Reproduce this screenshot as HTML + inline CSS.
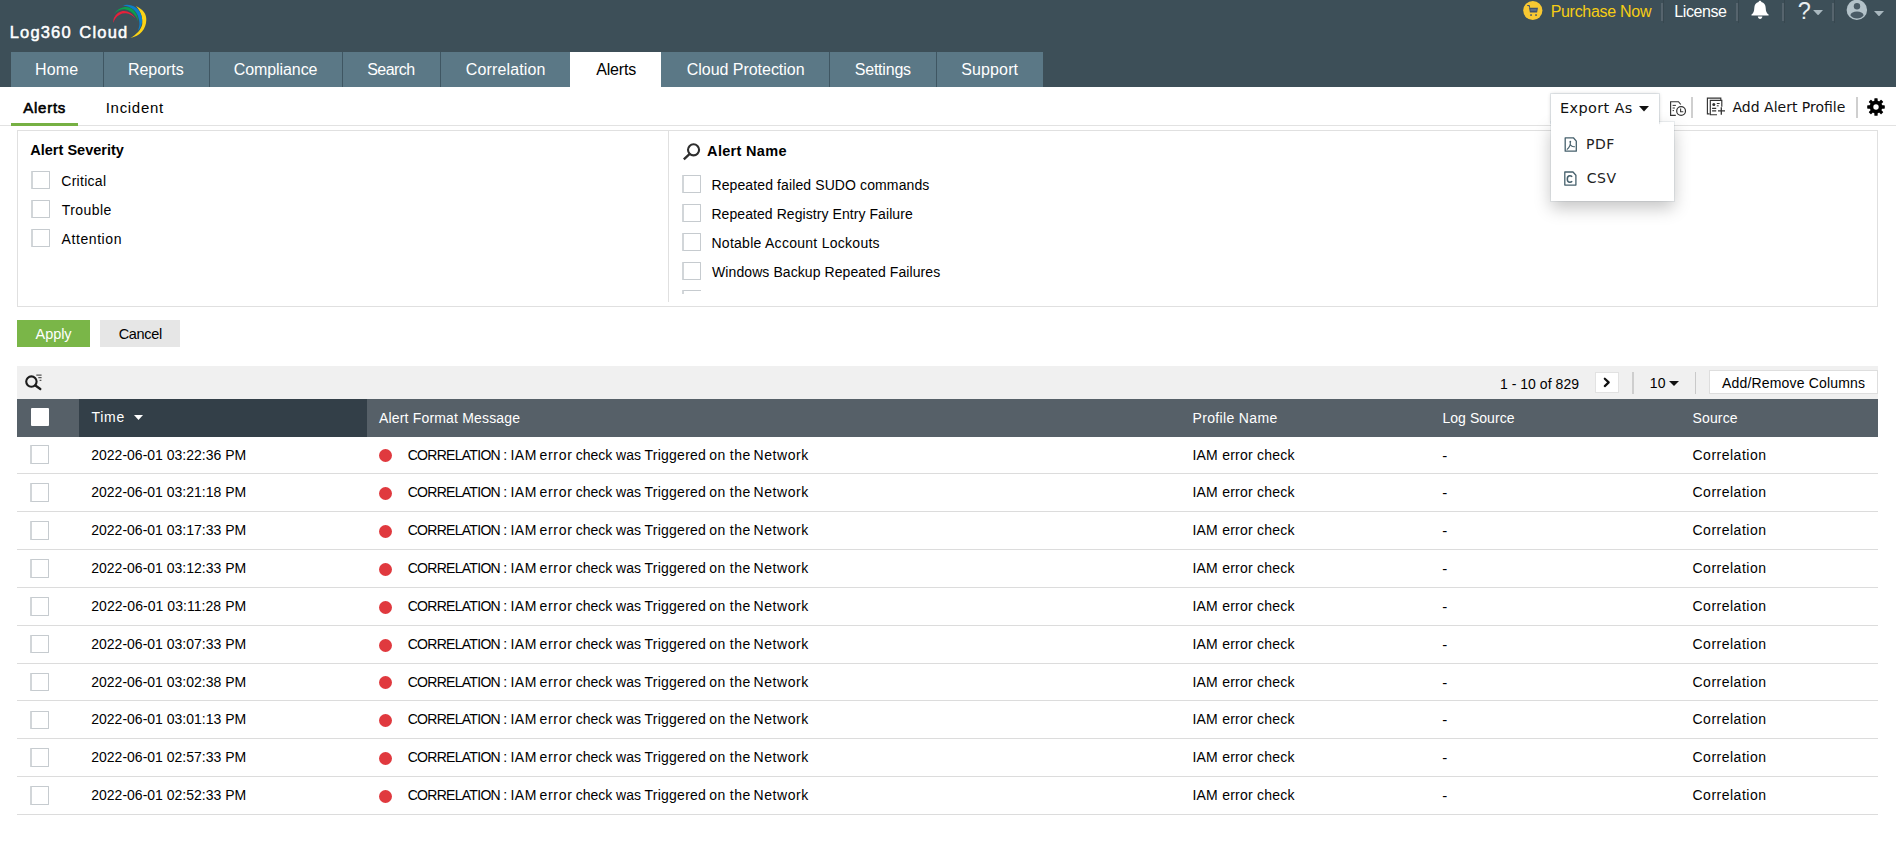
<!DOCTYPE html>
<html lang="en"><head><meta charset="utf-8"><title>Log360 Cloud - Alerts</title>
<style>
html,body{margin:0;padding:0;}
body{width:1896px;height:846px;overflow:hidden;background:#fff;position:relative;font-family:"Liberation Sans",sans-serif;font-size:14px;color:#000;}
.a{position:absolute;box-sizing:border-box;}
.t{position:absolute;white-space:nowrap;line-height:1;}
#hdr{left:0;top:0;width:1896px;height:87px;background:#3d4f58;}
.nav{top:52px;height:35px;background:#5b7886;border-right:1px solid #3f5662;}
.nav.sel{background:#fff;border:none;}
.hsep{top:3px;width:2px;height:18px;background:#56646d;}
.hsep2{top:0;width:1px;height:23px;background:#37474f;}
.cb{width:19px;height:18px;border:1px solid #c6cbcf;border-left:2px solid #d2d6d9;background:#fff;border-radius:1px;}
.row{left:17px;width:1861px;height:1px;background:#dcdcdc;}
.dot{left:379px;width:13px;height:13px;border-radius:50%;background:#e0393e;}
.vsep{width:1px;background:#c9c9c9;}
.rc{height:18.700px;margin-top:-.2px;}

</style></head>
<body>
<div class="a" id="hdr"></div>
<!-- logo arcs -->
<svg class="a" style="left:108px;top:0;width:44px;height:46px" viewBox="108 0 44 46">
  <path d="M136 6 C143.500 9.500 146.600 14.500 146.300 20 C146.200 29 140 36.300 130.300 38 C136.500 34.500 141 30 142.300 24 C142.800 17 140.500 11 136 6Z" fill="#fbd316"/>
  <path d="M123 5.400 C127 4.200 132 5 135.700 7.400 C139.500 10 142 14.500 142.200 19.900 C142.300 24 140.500 28 137.700 30.900 C139.200 27.500 139.600 25 139.400 22.700 C139 17 136.500 12 133.400 9.600 C130.500 7.200 127 5.800 123 5.400Z" fill="#0d7fc9"/>
  <path d="M113.900 14.500 C116 10.500 120 7.800 124.400 7.100 C128.500 6.600 132.500 8.500 135.100 11.900 C137.400 15 138.300 18.500 138 21.800 C137.500 19 136.800 17.800 135.700 16.500 C133 12.500 129.500 9.900 125.500 9.400 C121 9 116.800 11 113.900 14.500Z" fill="#0aa14f"/>
  <path d="M113.300 23 C113.200 20.500 113.500 19 114.200 17.600 C116 13.800 119.500 11.500 122.700 11.100 C127.500 10.500 132.500 13.500 135.400 18.400 C132.300 15.200 129.500 13.700 126 13.300 C121.500 13 117.800 15.200 115.600 18.200 C114.500 19.800 113.800 21.200 113.300 23Z" fill="#e8203a"/>
</svg>
<!-- nav tabs -->
<div class="a nav" style="left:11px;width:93px"></div>
<div class="a nav" style="left:104px;width:106px"></div>
<div class="a nav" style="left:210px;width:133px"></div>
<div class="a nav" style="left:343px;width:98px"></div>
<div class="a nav" style="left:441px;width:129px;border-right:none"></div>
<div class="a nav sel" style="left:570px;width:91px"></div>
<div class="a nav" style="left:661px;width:169px"></div>
<div class="a nav" style="left:830px;width:107px"></div>
<div class="a nav" style="left:937px;width:106px;border-right:none"></div>
<!-- top right -->
<svg class="a" style="left:1522px;top:0;width:22px;height:22px" viewBox="1522 0 22 22">
  <circle cx="1532.8" cy="10.5" r="9.6" fill="#f8c832"/>
  <path d="M1527.200 5.500h1.900l.6 2.100" fill="none" stroke="#3f516c" stroke-width="1.100"/>
  <path d="M1529 7.800h9l-.9 4.600h-7.200z" fill="#3f516c"/>
  <rect x="1530.500" y="9.200" width="6" height="1.500" fill="#66768a"/>
  <rect x="1530.200" y="14.300" width="1.700" height="1.500" fill="#3f516c"/><rect x="1535.200" y="14.300" width="1.700" height="1.500" fill="#3f516c"/>
</svg>
<div class="a hsep" style="left:1661px"></div><div class="a hsep2" style="left:1663px"></div>
<div class="a hsep" style="left:1736px"></div><div class="a hsep2" style="left:1738px"></div>
<div class="a hsep" style="left:1782px"></div><div class="a hsep2" style="left:1784px"></div>
<div class="a hsep" style="left:1832px"></div><div class="a hsep2" style="left:1834px"></div>
<svg class="a" style="left:1751px;top:0;width:19px;height:20px" viewBox="0 0 19 20">
  <path d="M9 .8C9.900 .8 10.300 1.400 10.400 2.100C13 2.800 14.600 5 14.700 8C14.800 11.500 15.600 13 17.600 14.600V15.600H.5V14.600C2.400 13 3.200 11.500 3.300 8C3.400 5 5 2.800 7.600 2.100C7.700 1.400 8.100 .8 9 .8Z" fill="#fff"/>
  <path d="M6.800 16.500H11.400C11.200 18 10.300 18.900 9.100 18.900C7.900 18.900 7 18 6.800 16.500Z" fill="#fff"/>
</svg>
<svg class="a" style="left:1813px;top:9.800px;width:10.200px;height:5.400px" viewBox="0 0 10 5.400"><path d="M0 0h10l-5 5.400z" fill="#a9b8bf"/></svg>
<svg class="a" style="left:1846px;top:0;width:22px;height:21px" viewBox="1846 0 22 21">
  <circle cx="1856.850" cy="9.900" r="10.200" fill="#b3c2c9"/>
  <circle cx="1857" cy="6.300" r="3.200" fill="#4a5b66"/>
  <path d="M1850.300 15.200C1851 12.600 1853.500 11.400 1857 11.400C1860.500 11.400 1863 12.600 1863.700 15.200C1862 17.300 1859.700 18.400 1857 18.400C1854.300 18.400 1852 17.300 1850.300 15.200Z" fill="#4a5b66"/>
</svg>
<svg class="a" style="left:1874px;top:10.800px;width:10px;height:5.400px" viewBox="0 0 10 5.400"><path d="M0 0h10l-5 5.400z" fill="#a9b8bf"/></svg>

<!-- sub tab -->
<div class="a" style="left:0;top:125px;width:1896px;height:1px;background:#e2e2e2"></div>
<div class="a" style="left:11px;top:123px;width:67px;height:3px;background:#76b043"></div>

<!-- filter panel -->
<div class="a" style="left:17px;top:130px;width:1861px;height:177px;border:1px solid #e0e0e0;background:#fff"></div>
<div class="a" style="left:668px;top:131px;width:1px;height:171px;background:#e0e0e0"></div>
<div class="a cb" style="left:31px;top:171px"></div>
<div class="a cb" style="left:31px;top:200px"></div>
<div class="a cb" style="left:31px;top:228.700px"></div>
<svg class="a" style="left:681px;top:141px;width:22px;height:21px" viewBox="681 141 22 21">
  <circle cx="693.550" cy="149.850" r="5.550" fill="none" stroke="#2e2e2e" stroke-width="2.100"/>
  <path d="M689.400 154.100L684.700 158.500" stroke="#2e2e2e" stroke-width="2.400" stroke-linecap="square"/>
</svg>
<div class="a cb" style="left:682px;top:175.400px"></div>
<div class="a cb" style="left:682px;top:204.200px"></div>
<div class="a cb" style="left:682px;top:233px"></div>
<div class="a cb" style="left:682px;top:261.700px"></div>
<div class="a" style="left:682px;top:290px;width:19px;height:4px;overflow:hidden"><div class="cb"></div></div>
<div class="a" style="left:17px;top:320px;width:73px;height:27px;background:#7ab648"></div>
<div class="a" style="left:100px;top:320px;width:80px;height:27px;background:#e6e6e6"></div>

<!-- export dropdown -->
<div class="a" style="left:1551px;top:122px;width:123px;height:79px;background:#fff;box-shadow:0 7px 16px rgba(0,0,0,.23),0 0 0 1px rgba(120,145,160,.13)"></div>
<div class="a" style="left:1551px;top:94px;width:108px;height:29px;background:#fff;box-shadow:0 0 4px rgba(0,0,0,.18),0 0 0 1px rgba(120,145,160,.16)"></div>
<div class="a" style="left:1551px;top:121px;width:108px;height:8px;background:#fff"></div>
<svg class="a" style="left:1639px;top:106px;width:10px;height:6px" viewBox="0 0 10 6"><path d="M0 0h10l-5 5.6z" fill="#111"/></svg>
<!-- schedule icon -->
<svg class="a" style="left:1668px;top:98px;width:22px;height:20px" viewBox="1668 98 22 20">
  <path d="M1675.800 115.300H1670.600V101.700H1678.500L1680.800 104.500" fill="none" stroke="#333" stroke-width="1.150"/>
  <path d="M1672.600 105.400h3.300M1672.600 108h2.300M1672.600 110.600h1.400" stroke="#333" stroke-width="1"/>
  <circle cx="1681.100" cy="111" r="4.400" fill="#fff" stroke="#333" stroke-width="1.200"/>
  <path d="M1680.600 108.400v3.300h2.700" fill="none" stroke="#333" stroke-width="1.100"/>
</svg>
<div class="a" style="left:1691px;top:97px;width:2px;height:21px;background:#cfcfcf"></div>
<!-- add profile icon -->
<svg class="a" style="left:1705px;top:96px;width:22px;height:21px" viewBox="1705 96 22 21">
  <path d="M1709.600 113.800H1707.400V98.100H1720.800V100" fill="none" stroke="#333" stroke-width="1.150"/>
  <path d="M1717 114.700H1710.300V100.400H1721.800V106.700" fill="none" stroke="#333" stroke-width="1.150"/>
  <circle cx="1713.800" cy="104.600" r="1.500" fill="#333"/>
  <path d="M1716.800 103.500h2.800M1716.800 105.800h1.900" stroke="#333" stroke-width="1"/>
  <path d="M1712.100 108.400h4.100M1712.100 110.800h4.100" stroke="#333" stroke-width="1.200"/>
  <path d="M1721.300 107.300v7.500M1718 110.900h7" stroke="#333" stroke-width="1.300"/>
</svg>
<div class="a" style="left:1856px;top:97px;width:2px;height:21px;background:#cfcfcf"></div>
<!-- gear -->
<svg class="a" style="left:1865.600px;top:97.400px;width:20px;height:20px" viewBox="-10 -10 20 20">
  <g fill="#000">
    <circle r="6.400"/>
    <rect id="gt" x="-1.650" y="-8.800" width="3.300" height="17.600" rx=".6"/>
    <use href="#gt" transform="rotate(45)"/><use href="#gt" transform="rotate(90)"/><use href="#gt" transform="rotate(135)"/>
  </g>
  <circle r="2.700" fill="#fff"/>
</svg>
<!-- pdf / csv icons -->
<svg class="a" style="left:1562px;top:135px;width:18px;height:19px" viewBox="1562 135 18 19">
  <path d="M1565.200 137.800H1573.400L1576.300 141.100V151.200H1565.200Z" fill="none" stroke="#46606c" stroke-width="1.300" stroke-linejoin="round"/>
  <circle cx="1570.300" cy="141.700" r=".9" fill="#46606c"/>
  <path d="M1570.300 142C1570.600 144 1569.500 147.300 1566.800 149.600M1570.300 144.800C1571.500 146.300 1573 147 1574.800 146.600" fill="none" stroke="#46606c" stroke-width="1.100"/>
</svg>
<svg class="a" style="left:1562px;top:169px;width:18px;height:19px" viewBox="1562 169 18 19">
  <path d="M1564.800 172H1573L1575.900 175.200V185.100H1564.800Z" fill="none" stroke="#46606c" stroke-width="1.300" stroke-linejoin="round"/>
  <path d="M1572.200 176.700C1571.500 176 1570.700 175.700 1569.800 175.700C1568.200 175.700 1567.300 177.100 1567.300 179C1567.300 180.900 1568.200 182.300 1569.800 182.300C1570.700 182.300 1571.500 182 1572.200 181.300" fill="none" stroke="#46606c" stroke-width="1.500"/>
</svg>

<!-- table toolbar -->
<div class="a" style="left:17px;top:366px;width:1861px;height:33px;background:#f0f0f0"></div>
<svg class="a" style="left:23px;top:372px;width:21px;height:20px" viewBox="23 372 21 20">
  <circle cx="31.400" cy="381.600" r="5.200" fill="none" stroke="#1c1c1c" stroke-width="2.100"/>
  <path d="M35.400 385.500L40.300 389" stroke="#1c1c1c" stroke-width="2.300" stroke-linecap="round"/>
  <path d="M36.300 375.100h5.300M38.300 377.700h3.300M39.600 380.300h1.800" stroke="#1c1c1c" stroke-width=".9"/>
</svg>
<div class="a" style="left:1595px;top:372px;width:24px;height:21px;background:#fff;border:1px solid #e2e2e2"></div>
<svg class="a" style="left:1602px;top:377px;width:10px;height:11px" viewBox="0 0 10 11"><path d="M2.800 1.700 L6.700 5.400 L2.800 9.100" fill="none" stroke="#111" stroke-width="2.200" stroke-linecap="round" stroke-linejoin="round"/></svg>
<div class="a vsep" style="left:1632px;top:372px;height:22px;width:2px;background:#cecece"></div>
<svg class="a" style="left:1669px;top:381px;width:10px;height:5px" viewBox="0 0 10 5"><path d="M0 0h10l-5 5z" fill="#111"/></svg>
<div class="a vsep" style="left:1695px;top:372px;height:22px"></div>
<div class="a" style="left:1709px;top:370px;width:169px;height:24px;background:#fff;border:1px solid #dedede"></div>

<!-- table header -->
<div class="a" style="left:17px;top:399px;width:1861px;height:38px;background:#566068"></div>
<div class="a" style="left:79px;top:399px;width:288px;height:38px;background:#333f48"></div>
<div class="a" style="left:30.500px;top:407.600px;width:18.500px;height:18.400px;background:#fff;border-radius:1px"></div>
<svg class="a" style="left:134px;top:415px;width:9px;height:5px" viewBox="0 0 9 5"><path d="M0 0h9l-4.500 5z" fill="#fff"/></svg>
<!-- rows -->
<div class="a cb rc" style="left:30.300px;top:445.60px"></div>
<div class="a dot" style="top:449.20px"></div>
<div class="a row" style="top:473px"></div>
<div class="a cb rc" style="left:30.300px;top:483.47px"></div>
<div class="a dot" style="top:487.07px"></div>
<div class="a row" style="top:511px"></div>
<div class="a cb rc" style="left:30.300px;top:521.34px"></div>
<div class="a dot" style="top:524.94px"></div>
<div class="a row" style="top:549px"></div>
<div class="a cb rc" style="left:30.300px;top:559.21px"></div>
<div class="a dot" style="top:562.81px"></div>
<div class="a row" style="top:587px"></div>
<div class="a cb rc" style="left:30.300px;top:597.08px"></div>
<div class="a dot" style="top:600.68px"></div>
<div class="a row" style="top:625px"></div>
<div class="a cb rc" style="left:30.300px;top:634.95px"></div>
<div class="a dot" style="top:638.55px"></div>
<div class="a row" style="top:663px"></div>
<div class="a cb rc" style="left:30.300px;top:672.82px"></div>
<div class="a dot" style="top:676.42px"></div>
<div class="a row" style="top:700px"></div>
<div class="a cb rc" style="left:30.300px;top:710.69px"></div>
<div class="a dot" style="top:714.29px"></div>
<div class="a row" style="top:738px"></div>
<div class="a cb rc" style="left:30.300px;top:748.56px"></div>
<div class="a dot" style="top:752.16px"></div>
<div class="a row" style="top:776px"></div>
<div class="a cb rc" style="left:30.300px;top:786.43px"></div>
<div class="a dot" style="top:790.03px"></div>
<div class="a row" style="top:814px"></div>

<div id="texts">
<span class="t" style="left:9.80px;top:24px;font-size:16.5px;color:#fff;letter-spacing:1.150px;-webkit-text-stroke:0.5px #fff;">Log360</span>
<span class="t" style="left:79.30px;top:24px;font-size:16.5px;color:#fff;letter-spacing:1.200px;-webkit-text-stroke:0.5px #fff;">Cloud</span>
<span class="t" style="left:1550.65px;top:4px;font-size:16px;color:#f6cd14;letter-spacing:-0.295px;">Purchase Now</span>
<span class="t" style="left:1674.35px;top:4px;font-size:16px;color:#fff;letter-spacing:-0.442px;">License</span>
<span class="t" style="left:1797.80px;top:0px;font-size:23.5px;color:#e9eef0;">?</span>
<span class="t" style="left:35.00px;top:62px;font-size:16px;color:#fff;letter-spacing:0.167px;">Home</span>
<span class="t" style="left:128.00px;top:62px;font-size:16px;color:#fff;letter-spacing:-0.042px;">Reports</span>
<span class="t" style="left:233.75px;top:62px;font-size:16px;color:#fff;letter-spacing:-0.083px;">Compliance</span>
<span class="t" style="left:367.25px;top:62px;font-size:16px;color:#fff;letter-spacing:-0.550px;">Search</span>
<span class="t" style="left:465.75px;top:62px;font-size:16px;color:#fff;letter-spacing:0.150px;">Correlation</span>
<span class="t" style="left:596.25px;top:62px;font-size:16px;letter-spacing:-0.200px;">Alerts</span>
<span class="t" style="left:686.75px;top:62px;font-size:16px;color:#fff;letter-spacing:-0.033px;">Cloud Protection</span>
<span class="t" style="left:854.75px;top:62px;font-size:16px;color:#fff;letter-spacing:-0.214px;">Settings</span>
<span class="t" style="left:961.25px;top:62px;font-size:16px;color:#fff;letter-spacing:0.125px;">Support</span>
<span class="t" style="left:23.15px;top:100px;font-size:15px;letter-spacing:0.770px;-webkit-text-stroke:0.6px #000;">Alerts</span>
<span class="t" style="left:105.75px;top:100px;font-size:15px;letter-spacing:0.693px;">Incident</span>
<span class="t" style="left:1560.00px;top:101px;font-size:14.5px;font-family:'DejaVu Sans', sans-serif;color:#111;letter-spacing:0.344px;">Export As</span>
<span class="t" style="left:1732.50px;top:100px;font-size:14px;font-family:'DejaVu Sans', sans-serif;color:#111;">Add Alert Profile</span>
<span class="t" style="left:1586.00px;top:137px;font-size:14px;font-family:'DejaVu Sans', sans-serif;color:#222;letter-spacing:0.500px;">PDF</span>
<span class="t" style="left:1586.75px;top:171px;font-size:14px;font-family:'DejaVu Sans', sans-serif;color:#222;letter-spacing:0.500px;">CSV</span>
<span class="t" style="left:30.25px;top:143px;font-size:14.5px;font-weight:700;letter-spacing:0.015px;">Alert Severity</span>
<span class="t" style="left:61.25px;top:174px;font-size:14px;letter-spacing:0.286px;">Critical</span>
<span class="t" style="left:61.75px;top:203px;font-size:14px;letter-spacing:0.450px;">Trouble</span>
<span class="t" style="left:61.60px;top:232px;font-size:14px;letter-spacing:0.575px;">Attention</span>
<span class="t" style="left:707.10px;top:144px;font-size:14.5px;font-weight:700;letter-spacing:0.311px;">Alert Name</span>
<span class="t" style="left:711.45px;top:178px;font-size:14px;letter-spacing:0.111px;">Repeated failed SUDO commands</span>
<span class="t" style="left:711.45px;top:207px;font-size:14px;letter-spacing:0.068px;">Repeated Registry Entry Failure</span>
<span class="t" style="left:711.45px;top:236px;font-size:14px;letter-spacing:0.274px;">Notable Account Lockouts</span>
<span class="t" style="left:712.05px;top:265px;font-size:14px;letter-spacing:0.081px;">Windows Backup Repeated Failures</span>
<span class="t" style="left:35.60px;top:327px;font-size:14.5px;color:#fff;letter-spacing:-0.088px;">Apply</span>
<span class="t" style="left:118.65px;top:327px;font-size:14.5px;letter-spacing:-0.330px;">Cancel</span>
<span class="t" style="left:1499.90px;top:377px;font-size:14px;letter-spacing:0.042px;">1 - 10 of 829</span>
<span class="t" style="left:1649.75px;top:376px;font-size:14px;letter-spacing:0.250px;">10</span>
<span class="t" style="left:1722.00px;top:376px;font-size:14px;letter-spacing:0.176px;">Add/Remove Columns</span>
<span class="t" style="left:91.45px;top:410px;font-size:14px;color:#fff;letter-spacing:0.717px;">Time</span>
<span class="t" style="left:379.00px;top:411px;font-size:14px;color:#fff;letter-spacing:0.174px;">Alert Format Message</span>
<span class="t" style="left:1192.45px;top:411px;font-size:14px;color:#fff;letter-spacing:0.355px;">Profile Name</span>
<span class="t" style="left:1442.45px;top:411px;font-size:14px;color:#fff;letter-spacing:0.050px;">Log Source</span>
<span class="t" style="left:1692.50px;top:411px;font-size:14px;color:#fff;letter-spacing:0.150px;">Source</span>
<span class="t" style="left:91.25px;top:448px;font-size:14px;">2022-06-01 03:22:36 PM</span>
<span class="t" style="left:407.65px;top:448px;font-size:14px;letter-spacing:-0.705px;">CORRELATION</span>
<span class="t" style="left:503.25px;top:448px;font-size:14px;">:</span>
<span class="t" style="left:510.45px;top:448px;font-size:14px;letter-spacing:0.500px;">IAM</span>
<span class="t" style="left:539.40px;top:448px;font-size:14px;letter-spacing:0.763px;">error</span>
<span class="t" style="left:575.70px;top:448px;font-size:14px;letter-spacing:-0.025px;">check</span>
<span class="t" style="left:616.10px;top:448px;font-size:14px;letter-spacing:0.025px;">was</span>
<span class="t" style="left:644.45px;top:448px;font-size:14px;letter-spacing:0.256px;">Triggered</span>
<span class="t" style="left:709.30px;top:448px;font-size:14px;letter-spacing:0.500px;">on</span>
<span class="t" style="left:729.85px;top:448px;font-size:14px;letter-spacing:0.500px;">the</span>
<span class="t" style="left:753.55px;top:448px;font-size:14px;letter-spacing:0.567px;">Network</span>
<span class="t" style="left:1192.45px;top:448px;font-size:14px;letter-spacing:0.229px;">IAM error check</span>
<span class="t" style="left:1442.25px;top:448px;font-size:15px;">-</span>
<span class="t" style="left:1692.50px;top:448px;font-size:14px;letter-spacing:0.500px;">Correlation</span>
<span class="t" style="left:91.25px;top:485px;font-size:14px;">2022-06-01 03:21:18 PM</span>
<span class="t" style="left:407.65px;top:485px;font-size:14px;letter-spacing:-0.705px;">CORRELATION</span>
<span class="t" style="left:503.25px;top:485px;font-size:14px;">:</span>
<span class="t" style="left:510.45px;top:485px;font-size:14px;letter-spacing:0.500px;">IAM</span>
<span class="t" style="left:539.40px;top:485px;font-size:14px;letter-spacing:0.763px;">error</span>
<span class="t" style="left:575.70px;top:485px;font-size:14px;letter-spacing:-0.025px;">check</span>
<span class="t" style="left:616.10px;top:485px;font-size:14px;letter-spacing:0.025px;">was</span>
<span class="t" style="left:644.45px;top:485px;font-size:14px;letter-spacing:0.256px;">Triggered</span>
<span class="t" style="left:709.30px;top:485px;font-size:14px;letter-spacing:0.500px;">on</span>
<span class="t" style="left:729.85px;top:485px;font-size:14px;letter-spacing:0.500px;">the</span>
<span class="t" style="left:753.55px;top:485px;font-size:14px;letter-spacing:0.567px;">Network</span>
<span class="t" style="left:1192.45px;top:485px;font-size:14px;letter-spacing:0.229px;">IAM error check</span>
<span class="t" style="left:1442.25px;top:485px;font-size:15px;">-</span>
<span class="t" style="left:1692.50px;top:485px;font-size:14px;letter-spacing:0.500px;">Correlation</span>
<span class="t" style="left:91.25px;top:523px;font-size:14px;">2022-06-01 03:17:33 PM</span>
<span class="t" style="left:407.65px;top:523px;font-size:14px;letter-spacing:-0.705px;">CORRELATION</span>
<span class="t" style="left:503.25px;top:523px;font-size:14px;">:</span>
<span class="t" style="left:510.45px;top:523px;font-size:14px;letter-spacing:0.500px;">IAM</span>
<span class="t" style="left:539.40px;top:523px;font-size:14px;letter-spacing:0.763px;">error</span>
<span class="t" style="left:575.70px;top:523px;font-size:14px;letter-spacing:-0.025px;">check</span>
<span class="t" style="left:616.10px;top:523px;font-size:14px;letter-spacing:0.025px;">was</span>
<span class="t" style="left:644.45px;top:523px;font-size:14px;letter-spacing:0.256px;">Triggered</span>
<span class="t" style="left:709.30px;top:523px;font-size:14px;letter-spacing:0.500px;">on</span>
<span class="t" style="left:729.85px;top:523px;font-size:14px;letter-spacing:0.500px;">the</span>
<span class="t" style="left:753.55px;top:523px;font-size:14px;letter-spacing:0.567px;">Network</span>
<span class="t" style="left:1192.45px;top:523px;font-size:14px;letter-spacing:0.229px;">IAM error check</span>
<span class="t" style="left:1442.25px;top:523px;font-size:15px;">-</span>
<span class="t" style="left:1692.50px;top:523px;font-size:14px;letter-spacing:0.500px;">Correlation</span>
<span class="t" style="left:91.25px;top:561px;font-size:14px;">2022-06-01 03:12:33 PM</span>
<span class="t" style="left:407.65px;top:561px;font-size:14px;letter-spacing:-0.705px;">CORRELATION</span>
<span class="t" style="left:503.25px;top:561px;font-size:14px;">:</span>
<span class="t" style="left:510.45px;top:561px;font-size:14px;letter-spacing:0.500px;">IAM</span>
<span class="t" style="left:539.40px;top:561px;font-size:14px;letter-spacing:0.763px;">error</span>
<span class="t" style="left:575.70px;top:561px;font-size:14px;letter-spacing:-0.025px;">check</span>
<span class="t" style="left:616.10px;top:561px;font-size:14px;letter-spacing:0.025px;">was</span>
<span class="t" style="left:644.45px;top:561px;font-size:14px;letter-spacing:0.256px;">Triggered</span>
<span class="t" style="left:709.30px;top:561px;font-size:14px;letter-spacing:0.500px;">on</span>
<span class="t" style="left:729.85px;top:561px;font-size:14px;letter-spacing:0.500px;">the</span>
<span class="t" style="left:753.55px;top:561px;font-size:14px;letter-spacing:0.567px;">Network</span>
<span class="t" style="left:1192.45px;top:561px;font-size:14px;letter-spacing:0.229px;">IAM error check</span>
<span class="t" style="left:1442.25px;top:561px;font-size:15px;">-</span>
<span class="t" style="left:1692.50px;top:561px;font-size:14px;letter-spacing:0.500px;">Correlation</span>
<span class="t" style="left:91.25px;top:599px;font-size:14px;letter-spacing:0.052px;">2022-06-01 03:11:28 PM</span>
<span class="t" style="left:407.65px;top:599px;font-size:14px;letter-spacing:-0.705px;">CORRELATION</span>
<span class="t" style="left:503.25px;top:599px;font-size:14px;">:</span>
<span class="t" style="left:510.45px;top:599px;font-size:14px;letter-spacing:0.500px;">IAM</span>
<span class="t" style="left:539.40px;top:599px;font-size:14px;letter-spacing:0.763px;">error</span>
<span class="t" style="left:575.70px;top:599px;font-size:14px;letter-spacing:-0.025px;">check</span>
<span class="t" style="left:616.10px;top:599px;font-size:14px;letter-spacing:0.025px;">was</span>
<span class="t" style="left:644.45px;top:599px;font-size:14px;letter-spacing:0.256px;">Triggered</span>
<span class="t" style="left:709.30px;top:599px;font-size:14px;letter-spacing:0.500px;">on</span>
<span class="t" style="left:729.85px;top:599px;font-size:14px;letter-spacing:0.500px;">the</span>
<span class="t" style="left:753.55px;top:599px;font-size:14px;letter-spacing:0.567px;">Network</span>
<span class="t" style="left:1192.45px;top:599px;font-size:14px;letter-spacing:0.229px;">IAM error check</span>
<span class="t" style="left:1442.25px;top:599px;font-size:15px;">-</span>
<span class="t" style="left:1692.50px;top:599px;font-size:14px;letter-spacing:0.500px;">Correlation</span>
<span class="t" style="left:91.25px;top:637px;font-size:14px;">2022-06-01 03:07:33 PM</span>
<span class="t" style="left:407.65px;top:637px;font-size:14px;letter-spacing:-0.705px;">CORRELATION</span>
<span class="t" style="left:503.25px;top:637px;font-size:14px;">:</span>
<span class="t" style="left:510.45px;top:637px;font-size:14px;letter-spacing:0.500px;">IAM</span>
<span class="t" style="left:539.40px;top:637px;font-size:14px;letter-spacing:0.763px;">error</span>
<span class="t" style="left:575.70px;top:637px;font-size:14px;letter-spacing:-0.025px;">check</span>
<span class="t" style="left:616.10px;top:637px;font-size:14px;letter-spacing:0.025px;">was</span>
<span class="t" style="left:644.45px;top:637px;font-size:14px;letter-spacing:0.256px;">Triggered</span>
<span class="t" style="left:709.30px;top:637px;font-size:14px;letter-spacing:0.500px;">on</span>
<span class="t" style="left:729.85px;top:637px;font-size:14px;letter-spacing:0.500px;">the</span>
<span class="t" style="left:753.55px;top:637px;font-size:14px;letter-spacing:0.567px;">Network</span>
<span class="t" style="left:1192.45px;top:637px;font-size:14px;letter-spacing:0.229px;">IAM error check</span>
<span class="t" style="left:1442.25px;top:637px;font-size:15px;">-</span>
<span class="t" style="left:1692.50px;top:637px;font-size:14px;letter-spacing:0.500px;">Correlation</span>
<span class="t" style="left:91.25px;top:675px;font-size:14px;">2022-06-01 03:02:38 PM</span>
<span class="t" style="left:407.65px;top:675px;font-size:14px;letter-spacing:-0.705px;">CORRELATION</span>
<span class="t" style="left:503.25px;top:675px;font-size:14px;">:</span>
<span class="t" style="left:510.45px;top:675px;font-size:14px;letter-spacing:0.500px;">IAM</span>
<span class="t" style="left:539.40px;top:675px;font-size:14px;letter-spacing:0.763px;">error</span>
<span class="t" style="left:575.70px;top:675px;font-size:14px;letter-spacing:-0.025px;">check</span>
<span class="t" style="left:616.10px;top:675px;font-size:14px;letter-spacing:0.025px;">was</span>
<span class="t" style="left:644.45px;top:675px;font-size:14px;letter-spacing:0.256px;">Triggered</span>
<span class="t" style="left:709.30px;top:675px;font-size:14px;letter-spacing:0.500px;">on</span>
<span class="t" style="left:729.85px;top:675px;font-size:14px;letter-spacing:0.500px;">the</span>
<span class="t" style="left:753.55px;top:675px;font-size:14px;letter-spacing:0.567px;">Network</span>
<span class="t" style="left:1192.45px;top:675px;font-size:14px;letter-spacing:0.229px;">IAM error check</span>
<span class="t" style="left:1442.25px;top:675px;font-size:15px;">-</span>
<span class="t" style="left:1692.50px;top:675px;font-size:14px;letter-spacing:0.500px;">Correlation</span>
<span class="t" style="left:91.25px;top:712px;font-size:14px;">2022-06-01 03:01:13 PM</span>
<span class="t" style="left:407.65px;top:712px;font-size:14px;letter-spacing:-0.705px;">CORRELATION</span>
<span class="t" style="left:503.25px;top:712px;font-size:14px;">:</span>
<span class="t" style="left:510.45px;top:712px;font-size:14px;letter-spacing:0.500px;">IAM</span>
<span class="t" style="left:539.40px;top:712px;font-size:14px;letter-spacing:0.763px;">error</span>
<span class="t" style="left:575.70px;top:712px;font-size:14px;letter-spacing:-0.025px;">check</span>
<span class="t" style="left:616.10px;top:712px;font-size:14px;letter-spacing:0.025px;">was</span>
<span class="t" style="left:644.45px;top:712px;font-size:14px;letter-spacing:0.256px;">Triggered</span>
<span class="t" style="left:709.30px;top:712px;font-size:14px;letter-spacing:0.500px;">on</span>
<span class="t" style="left:729.85px;top:712px;font-size:14px;letter-spacing:0.500px;">the</span>
<span class="t" style="left:753.55px;top:712px;font-size:14px;letter-spacing:0.567px;">Network</span>
<span class="t" style="left:1192.45px;top:712px;font-size:14px;letter-spacing:0.229px;">IAM error check</span>
<span class="t" style="left:1442.25px;top:712px;font-size:15px;">-</span>
<span class="t" style="left:1692.50px;top:712px;font-size:14px;letter-spacing:0.500px;">Correlation</span>
<span class="t" style="left:91.25px;top:750px;font-size:14px;">2022-06-01 02:57:33 PM</span>
<span class="t" style="left:407.65px;top:750px;font-size:14px;letter-spacing:-0.705px;">CORRELATION</span>
<span class="t" style="left:503.25px;top:750px;font-size:14px;">:</span>
<span class="t" style="left:510.45px;top:750px;font-size:14px;letter-spacing:0.500px;">IAM</span>
<span class="t" style="left:539.40px;top:750px;font-size:14px;letter-spacing:0.763px;">error</span>
<span class="t" style="left:575.70px;top:750px;font-size:14px;letter-spacing:-0.025px;">check</span>
<span class="t" style="left:616.10px;top:750px;font-size:14px;letter-spacing:0.025px;">was</span>
<span class="t" style="left:644.45px;top:750px;font-size:14px;letter-spacing:0.256px;">Triggered</span>
<span class="t" style="left:709.30px;top:750px;font-size:14px;letter-spacing:0.500px;">on</span>
<span class="t" style="left:729.85px;top:750px;font-size:14px;letter-spacing:0.500px;">the</span>
<span class="t" style="left:753.55px;top:750px;font-size:14px;letter-spacing:0.567px;">Network</span>
<span class="t" style="left:1192.45px;top:750px;font-size:14px;letter-spacing:0.229px;">IAM error check</span>
<span class="t" style="left:1442.25px;top:750px;font-size:15px;">-</span>
<span class="t" style="left:1692.50px;top:750px;font-size:14px;letter-spacing:0.500px;">Correlation</span>
<span class="t" style="left:91.25px;top:788px;font-size:14px;">2022-06-01 02:52:33 PM</span>
<span class="t" style="left:407.65px;top:788px;font-size:14px;letter-spacing:-0.705px;">CORRELATION</span>
<span class="t" style="left:503.25px;top:788px;font-size:14px;">:</span>
<span class="t" style="left:510.45px;top:788px;font-size:14px;letter-spacing:0.500px;">IAM</span>
<span class="t" style="left:539.40px;top:788px;font-size:14px;letter-spacing:0.763px;">error</span>
<span class="t" style="left:575.70px;top:788px;font-size:14px;letter-spacing:-0.025px;">check</span>
<span class="t" style="left:616.10px;top:788px;font-size:14px;letter-spacing:0.025px;">was</span>
<span class="t" style="left:644.45px;top:788px;font-size:14px;letter-spacing:0.256px;">Triggered</span>
<span class="t" style="left:709.30px;top:788px;font-size:14px;letter-spacing:0.500px;">on</span>
<span class="t" style="left:729.85px;top:788px;font-size:14px;letter-spacing:0.500px;">the</span>
<span class="t" style="left:753.55px;top:788px;font-size:14px;letter-spacing:0.567px;">Network</span>
<span class="t" style="left:1192.45px;top:788px;font-size:14px;letter-spacing:0.229px;">IAM error check</span>
<span class="t" style="left:1442.25px;top:788px;font-size:15px;">-</span>
<span class="t" style="left:1692.50px;top:788px;font-size:14px;letter-spacing:0.500px;">Correlation</span>
</div>
</body></html>
